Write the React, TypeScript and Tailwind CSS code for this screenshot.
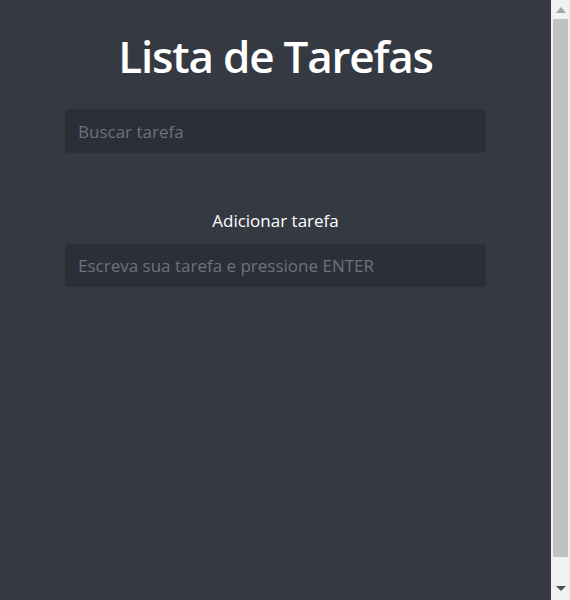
import React, { useState } from 'react';

const App: React.FC = () => {
  const [busca, setBusca] = useState('');
  const [tarefa, setTarefa] = useState('');

  return (
    <div className="h-screen flex bg-[#353a42] text-white font-['Open_Sans',sans-serif] overflow-hidden">
      <div className="flex-1">
        <div className="w-[421px] mx-auto pt-[28px] flex flex-col items-center">
          <h1 className="text-[44px] font-semibold leading-[56px] tracking-[-1.2px] mb-[25px]">Lista de Tarefas</h1>

          <input
            type="text"
            value={busca}
            onChange={(e) => setBusca(e.target.value)}
            placeholder="Buscar tarefa"
            className="w-full h-[44px] px-[13px] rounded-[4px] bg-[#2b2f37] text-[17px] text-white placeholder:text-[#6c737c] outline-none"
          />

          <label className="mt-[56px] mb-[11px] text-[17px] leading-[24px]">Adicionar tarefa</label>
          <input
            type="text"
            value={tarefa}
            onChange={(e) => setTarefa(e.target.value)}
            placeholder="Escreva sua tarefa e pressione ENTER"
            className="w-full h-[43px] px-[13px] rounded-[4px] bg-[#2b2f37] text-[17px] text-white placeholder:text-[#6c737c] outline-none"
          />
        </div>
      </div>

      {/* scrollbar */}
      <div className="w-[19px] bg-[#f1f1f1] flex flex-col">
        <div className="h-[19px] pt-[7px] flex justify-center">
          <svg width="10" height="6" viewBox="0 0 10 6"><path d="M5 0L10 6H0z" fill="#a3a3a3" /></svg>
        </div>
        <div className="h-[538px] mx-[2px] bg-[#c1c1c1]" />
        <div className="flex-1 pt-[29px] flex justify-center">
          <svg width="10" height="5" viewBox="0 0 10 5"><path d="M0 0H10L5 5z" fill="#505050" /></svg>
        </div>
      </div>
    </div>
  );
};

export default App;
